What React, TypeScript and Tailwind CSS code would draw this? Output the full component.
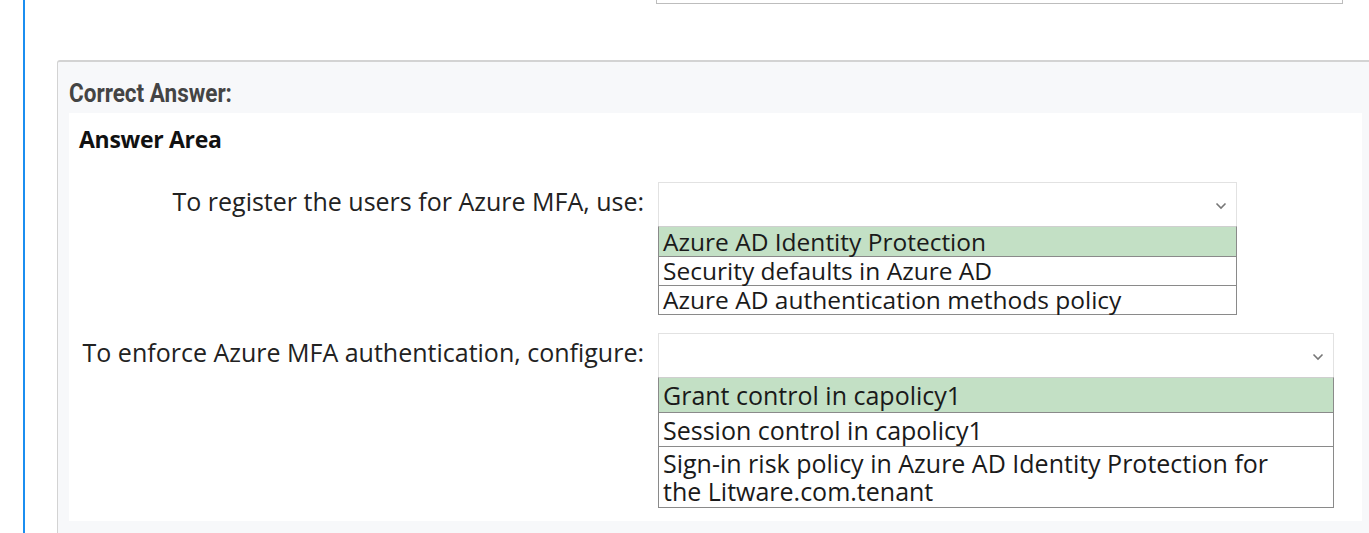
import React from "react";

interface DropdownProps {
  width: string;
  options: string[];
  rowClass: string;
  textClass: string;
}

const Chevron = () => (
  <svg width="12" height="8" viewBox="0 0 12 8" className="text-[#777]">
    <path d="M1.5 1.5 L6 6 L10.5 1.5" fill="none" stroke="currentColor" strokeWidth="1.6" />
  </svg>
);

const Dropdown: React.FC<DropdownProps> = ({ width, options, rowClass, textClass }) => {
  return (
    <div className={width}>
      <div className="h-[44px] border border-b-0 border-[#e2e2e2] bg-white flex items-center justify-end pr-[9px] pt-[3px]">
        <Chevron />
      </div>
      <div className="border border-[#8a8a8a] border-t-[#cfcfcf]">
        {options.map((opt, i) => (
          <div
            key={opt}
            className={`${rowClass} ${i > 0 ? "border-t border-[#8a8a8a]" : ""} ${
              i === 0 ? "bg-[#c3e0c5]" : "bg-white"
            } px-[4px] flex items-center`}
          >
            <span className={`${textClass} text-[#1a1a1a]`}>{opt}</span>
          </div>
        ))}
      </div>
    </div>
  );
};

export default function App() {
  const segoe = "font-['Open_Sans','Noto_Sans',sans-serif]";
  return (
    <div className="w-[1369px] h-[533px] overflow-hidden bg-white flex">
      <div className="ml-[23px] w-[2px] shrink-0 bg-[#1b8ef0]" />
      <div className="flex-1 min-w-0">
        {/* tail of the previous question's box */}
        <div className="ml-[631px] w-[687px] h-[4px] border border-t-0 border-[#bdbdbd]" />

        <div className="ml-[32px] mt-[56px] border-t-2 border-l border-[#d3d3d3] rounded-tl-[3px] bg-[#f7f8fa] pl-[11px] pt-[18px]">
          <div className="font-['Roboto',sans-serif] font-bold text-[25px] leading-[28px] text-[#444] scale-x-[0.9] origin-left">
            Correct Answer:
          </div>

          <div className={`mt-[5px] w-[1293px] h-[408px] bg-white ${segoe} text-[#222]`}>
            <div className="pl-[10px] pt-[9px] font-bold text-[23px] leading-[34px] tracking-[-0.3px] text-[#111]">
              Answer Area
            </div>

            <div className="mt-[26px] grid grid-cols-[575px_auto] gap-x-[14px] items-start">
              <div className="text-right text-[25px] leading-[30px] pt-[4px]">
                To register the users for Azure MFA, use:
              </div>
              <Dropdown
                width="w-[579px]"
                options={[
                  "Azure AD Identity Protection",
                  "Security defaults in Azure AD",
                  "Azure AD authentication methods policy",
                ]}
                rowClass="h-[29px]"
                textClass="text-[24.5px] leading-[26px]"
              />

              <div className="mt-[18px] text-right text-[25px] leading-[30px] pt-[4px]">
                To enforce Azure MFA authentication, configure:
              </div>
              <div className="mt-[18px]">
                <Dropdown
                  width="w-[676px]"
                  options={[
                    "Grant control in capolicy1",
                    "Session control in capolicy1",
                    "Sign-in risk policy in Azure AD Identity Protection for the Litware.com.tenant",
                  ]}
                  rowClass="min-h-[34px] py-[2px]"
                  textClass="text-[25px] leading-[28px] max-w-[630px]"
                />
              </div>
            </div>
          </div>

          <div className="pt-[5px] pl-[3px] font-['Roboto',sans-serif] text-[20px] text-[#444]">
            Box 1: Azure AD Identity Protection
          </div>
        </div>
      </div>
    </div>
  );
}
